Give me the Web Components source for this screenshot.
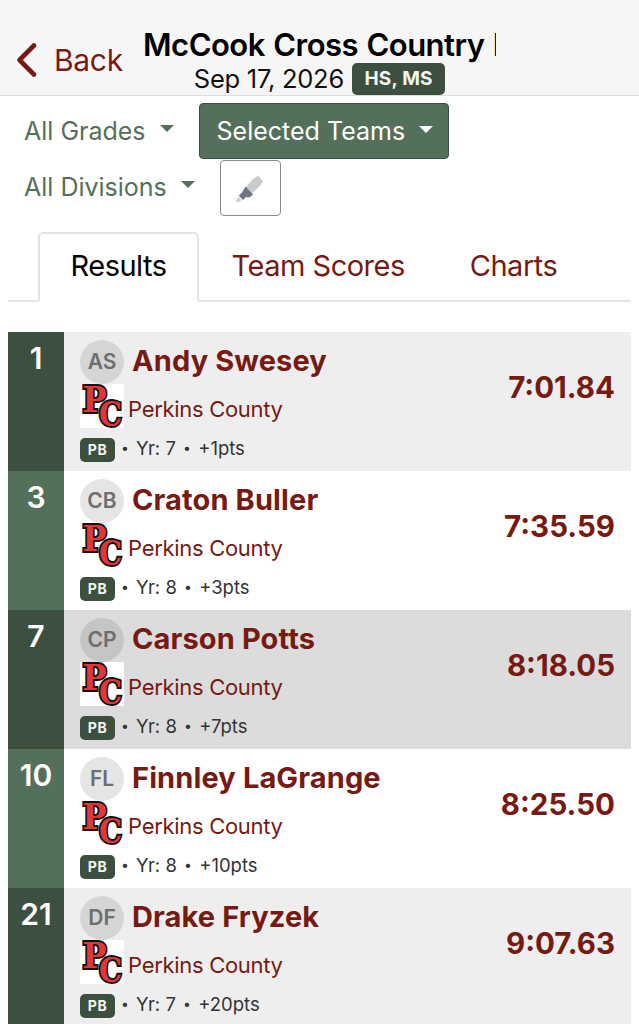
<!DOCTYPE html>
<html>
<head>
<meta charset="utf-8">
<title>McCook Cross Country</title>
<style>
  html, body { margin: 0; background: #fff; }
  body { font-family: Inter, "Liberation Sans", sans-serif; overflow: hidden; height: 1024px; }
</style>
</head>
<body>
<meet-header></meet-header>
<filter-bar>
  <filter-drop>All Grades</filter-drop>
  <filter-drop active>Selected Teams</filter-drop>
  <filter-drop>All Divisions</filter-drop>
  <marker-button></marker-button>
</filter-bar>
<tab-bar>
  <tab-item active>Results</tab-item>
  <tab-item>Team Scores</tab-item>
  <tab-item>Charts</tab-item>
</tab-bar>
<result-list>
  <result-row rank="1" initials="AS" name="Andy Swesey" year="7" pts="1" time="7:01.84" bg="#eeeeee" tone="dark"></result-row>
  <result-row rank="3" initials="CB" name="Craton Buller" year="8" pts="3" time="7:35.59" bg="#ffffff" tone="light"></result-row>
  <result-row rank="7" initials="CP" name="Carson Potts" year="8" pts="7" time="8:18.05" bg="#dcdcdc" tone="dark"></result-row>
  <result-row rank="10" initials="FL" name="Finnley LaGrange" year="8" pts="10" time="8:25.50" bg="#ffffff" tone="light"></result-row>
  <result-row rank="21" initials="DF" name="Drake Fryzek" year="7" pts="20" time="9:07.63" bg="#eeeeee" tone="dark"></result-row>
</result-list>

<script>
class MeetHeader extends HTMLElement {
  constructor() {
    super();
    this.attachShadow({ mode: "open" }).innerHTML = `
      <style>
        :host { display: block; height: 95px; box-sizing: content-box; background: #f6f6f6; border-bottom: 1px solid #dddddd; position: relative; }
        .bar { display: flex; height: 95px; align-items: flex-end; justify-content: center; }
        .back { position: absolute; left: 14px; top: 42px; display: flex; align-items: center; gap: 16px; color: #761a13; font-size: 30px; line-height: 36px; letter-spacing: -.3px; }
        .back svg { display: block; }
        .center { width: 353px; display: flex; flex-direction: column; align-items: center; }
        .title { width: 100%; overflow: hidden; white-space: nowrap; color: #000; font-size: 31px; font-weight: 600; line-height: 36px; letter-spacing: -.5px; word-spacing: 1px; }
        .sub { display: flex; align-items: center; gap: 8px; color: #111; font-size: 25.5px; line-height: 32px; letter-spacing: -.25px; }
        .badge { background: #3d5040; color: #f2f4f2; border-radius: 5px; font-size: 19px; font-weight: 700; height: 32px; line-height: 32px; padding: 0 12.5px; letter-spacing: .2px; }
      </style>
      <div class="bar">
        <div class="back">
          <svg width="24" height="36" viewBox="0 0 24 36"><path d="M20 3.5 5.5 18 20 32.5" fill="none" stroke="#761a13" stroke-width="4.6" stroke-linecap="round" stroke-linejoin="round"/></svg>
          <span>Back</span>
        </div>
        <div class="center">
          <div class="title">McCook Cross Country Invitational</div>
          <div class="sub"><span>Sep 17, 2026</span><span class="badge">HS, MS</span></div>
        </div>
      </div>`;
  }
}

class FilterBar extends HTMLElement {
  constructor() {
    super();
    this.attachShadow({ mode: "open" }).innerHTML = `
      <style>
        :host { display: flex; flex-wrap: wrap; align-content: flex-start; align-items: flex-start; box-sizing: border-box; height: 136px; width: 520px; padding: 7px 0 0 8px; }
      </style>
      <slot></slot>`;
  }
}

class FilterDrop extends HTMLElement {
  constructor() {
    super();
    this.attachShadow({ mode: "open" }).innerHTML = `
      <style>
        :host { display: inline-flex; align-items: center; box-sizing: border-box; height: 56px; padding: 0 17px 1px 15px; gap: 14px; color: #55705a; font-size: 25px; letter-spacing: 0; border: 1px solid transparent; border-radius: 4px; white-space: nowrap; }
        :host([active]) { background: #55705a; border-color: #3d5040; color: #fff; margin-left: 7px; padding: 0 15px 0 17px; }
        .caret { width: 0; height: 0; border-left: 7.5px solid transparent; border-right: 7.5px solid transparent; border-top: 7.5px solid currentColor; margin-top: -4px; }
      </style>
      <slot></slot><span class="caret"></span>`;
  }
}

class MarkerButton extends HTMLElement {
  constructor() {
    super();
    this.attachShadow({ mode: "open" }).innerHTML = `
      <style>
        :host { display: inline-flex; align-items: center; justify-content: center; box-sizing: border-box; width: 61px; height: 56px; margin: 1px 0 0 7px; border: 1.5px solid #868c94; border-radius: 4px; background: #fff; }
        svg { display: block; }
      </style>
      <svg width="30" height="30" viewBox="0 0 30 30">
        <path d="M17.5 6.5 23 2.5 28 8.5 24.5 13.5 15.8 21.5 10 15z" fill="#c9cbcf"/>
        <path d="M10.5 13.5 18 21.5 14.5 24.5 11 24 8 27 3.8 22.8 7 19.5z" fill="#6d7682"/>
        <path d="M3.5 24 6.5 27 4 29 0.5 28.5z" fill="#c9cbcf"/>
      </svg>`;
  }
}

class TabBar extends HTMLElement {
  constructor() {
    super();
    this.attachShadow({ mode: "open" }).innerHTML = `
      <style>
        :host { display: flex; box-sizing: border-box; height: 70px; margin: 0 8px; padding-left: 30px; border-bottom: 2px solid #e1e3e6; }
      </style>
      <slot></slot>`;
  }
}

class TabItem extends HTMLElement {
  constructor() {
    super();
    this.attachShadow({ mode: "open" }).innerHTML = `
      <style>
        :host { display: block; box-sizing: border-box; height: 70px; padding: 0 30.5px; line-height: 64px; color: #761a13; font-size: 29px; letter-spacing: -.5px; border: 2px solid transparent; border-radius: 5px 5px 0 0; white-space: nowrap; }
        :host([active]) { color: #000; border-color: #e1e3e6; border-bottom-color: #fff; background: #fff; }
      </style>
      <slot></slot>`;
  }
}

class ResultList extends HTMLElement {
  constructor() {
    super();
    this.attachShadow({ mode: "open" }).innerHTML = `
      <style>
        :host { display: flex; flex-direction: column; margin: 30px 8px 0; }
      </style>
      <slot></slot>`;
  }
}

class ResultRow extends HTMLElement {
  constructor() {
    super();
    const a = (k) => this.getAttribute(k);
    const rankBg = a("tone") === "dark" ? "#3d5040" : "#55705a";
    this.attachShadow({ mode: "open" }).innerHTML = `
      <style>
        :host { display: flex; height: 139px; flex: none; background: ${a("bg")}; }
        .rank { width: 56px; flex: none; background: ${rankBg}; color: #fff; text-align: center; font-size: 30px; font-weight: 600; line-height: 34px; padding-top: 9px; box-sizing: border-box; }
        .body { flex: 1; min-width: 0; display: flex; flex-direction: column; padding: 8px 0 0 16px; }
        .top { display: flex; align-items: center; gap: 8px; height: 44px; }
        .avatar { width: 44px; height: 44px; border-radius: 50%; background: rgba(0,0,0,.1); color: #6e6e6e; font-size: 21px; font-weight: 600; display: flex; align-items: center; justify-content: center; flex: none; padding-bottom: 1px; box-sizing: border-box; }
        .name { color: #761a13; font-size: 29px; font-weight: 700; letter-spacing: .12px; white-space: nowrap; margin-top: -3px; }
        .team { display: flex; align-items: center; gap: 4px; height: 44px; }
        .logo { width: 44px; height: 44px; flex: none; display: block; overflow: visible; }
        .team span { color: #761a13; font-size: 22px; letter-spacing: -.3px; margin-top: 6px; }
        .meta { display: flex; align-items: center; gap: 6px; margin-top: 10px; height: 24px; color: #333; font-size: 18.5px; white-space: nowrap; }
        .meta .txt { margin-top: -4px; }
        .dot { font-size: 14px; vertical-align: 2px; margin: 0 2px; }
        .dot.first { margin-left: 0; }
        .pb { background: #3d5040; color: #f2f4f2; width: 35px; height: 24px; line-height: 24px; text-align: center; border-radius: 5px; font-size: 14px; font-weight: 700; letter-spacing: .5px; }
        .time { flex: none; color: #761a13; font-size: 29.5px; font-weight: 700; line-height: 36px; margin: 37px 16px 0 0; }
      </style>
      <div class="rank">${a("rank")}</div>
      <div class="body">
        <div class="top"><div class="avatar">${a("initials")}</div><div class="name">${a("name")}</div></div>
        <div class="team">
          <svg class="logo" viewBox="0 0 44 44">
            <rect width="44" height="44" fill="#fff"/>
            <g font-family="'DejaVu Serif','Liberation Serif',serif" font-weight="700" fill="#e2373a" stroke="#111" stroke-width="3.8" paint-order="stroke" stroke-linejoin="miter">
              <text x="2.5" y="28" font-size="36" textLength="24" lengthAdjust="spacingAndGlyphs">P</text>
              <text x="19" y="41.5" font-size="34" textLength="23" lengthAdjust="spacingAndGlyphs">C</text>
            </g>
          </svg>
          <span>Perkins County</span>
        </div>
        <div class="meta"><span class="pb">PB</span><span class="txt"><span class="dot first">•</span> Yr: ${a("year")} <span class="dot">•</span> +${a("pts")}pts</span></div>
      </div>
      <div class="time">${a("time")}</div>`;
  }
}

customElements.define("meet-header", MeetHeader);
customElements.define("filter-bar", FilterBar);
customElements.define("filter-drop", FilterDrop);
customElements.define("marker-button", MarkerButton);
customElements.define("tab-bar", TabBar);
customElements.define("tab-item", TabItem);
customElements.define("result-list", ResultList);
customElements.define("result-row", ResultRow);
</script>
</body>
</html>
